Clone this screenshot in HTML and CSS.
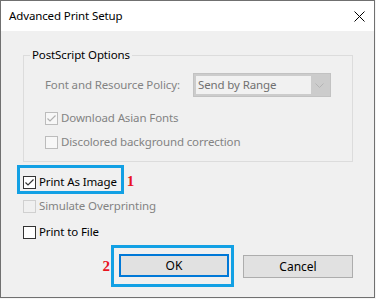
FILE: index.html
```html
<!DOCTYPE html>
<html lang="en">
<head>
    <meta charset="UTF-8">
    <title>Advanced Print Setup</title>
    <link rel="stylesheet" href="styles.css">
</head>
<body>

    <div class="window">
        <!-- Title Bar -->
        <div class="titlebar">
            <span class="title">Advanced Print Setup</span>
            <span class="close">
                <svg width="11" height="11" viewBox="0 0 11 11">
                    <path d="M0.5 0.5 L10.5 10.5 M10.5 0.5 L0.5 10.5" stroke="#000" stroke-width="1" fill="none"/>
                </svg>
            </span>
        </div>

        <div class="content">
            <!-- PostScript Options -->
            <fieldset class="group">
                <legend>PostScript Options</legend>
                <div class="group-body">
                    <div class="field-row">
                        <span class="field-label">Font and Resource Policy:</span>
                        <div class="combo">
                            <span class="combo-text">Send by Range</span>
                            <span class="combo-arrow">
                                <svg width="9" height="5" viewBox="0 0 9 5">
                                    <path d="M0.5 0.5 L4.5 4.5 L8.5 0.5" stroke="#b4b4b4" stroke-width="1" fill="none"/>
                                </svg>
                            </span>
                        </div>
                    </div>
                    <label class="check-row disabled">
                        <span class="box">
                            <svg width="11" height="11" viewBox="0 0 11 11">
                                <path d="M1.5 5.5 L4 8 L9.5 2.5" stroke="#b0b0b0" stroke-width="1.2" fill="none"/>
                            </svg>
                        </span>
                        Download Asian Fonts
                    </label>
                    <label class="check-row disabled">
                        <span class="box"></span>
                        Discolored background correction
                    </label>
                </div>
            </fieldset>

            <!-- Print As Image -->
            <div class="annotated">
                <label class="check-row highlight">
                    <span class="box">
                        <svg width="11" height="11" viewBox="0 0 11 11">
                            <path d="M1.5 5.5 L4 8 L9.5 2.5" stroke="#333" stroke-width="1.2" fill="none"/>
                        </svg>
                    </span>
                    Print As Image
                </label>
                <span class="marker">1</span>
            </div>

            <label class="check-row disabled faint">
                <span class="box"></span>
                Simulate Overprinting
            </label>

            <label class="check-row print-file">
                <span class="box"></span>
                Print to File
            </label>

            <!-- Buttons -->
            <div class="buttons">
                <span class="marker">2</span>
                <span class="btn-highlight">
                    <button class="btn btn-default">OK</button>
                </span>
                <button class="btn btn-cancel">Cancel</button>
            </div>
        </div>
    </div>

</body>
</html>
```

FILE: styles.css
```css
* {
    margin: 0;
    padding: 0;
    box-sizing: border-box;
}

body {
    font-family: 'Noto Sans', 'Open Sans', sans-serif;
    font-size: 11.5px;
    letter-spacing: -0.12px;
    line-height: 16px;
    background-color: #f5f5f5;
    color: #000;
}

/* Window frame */
.window {
    width: 375px;
    height: 298px;
    border: 1px solid #707070;
    background-color: #f0f0f0;
}

.titlebar {
    height: 30px;
    background-color: #fff;
    display: flex;
    align-items: center;
    justify-content: space-between;
    padding: 0 9px 0 8px;
}

.title {
    padding-bottom: 1px;
}

.close {
    display: flex;
}

.content {
    padding: 16px 21px 0 22px;
}

/* Group box */
.group {
    border: 1px solid #dcdcdc;
    padding: 0 21px 7px 6px;
    min-width: 0;
}

.group legend {
    padding: 0 2px;
    line-height: 16px;
}

.group-body {
    padding-left: 15px;
    padding-top: 10px;
}

.field-row {
    display: flex;
    align-items: center;
    height: 24px;
}

.field-label {
    width: 148px;
    color: #838383;
}

.combo {
    width: 138px;
    height: 24px;
    border: 1px solid #c2c2c2;
    background-color: #cccccc;
    padding: 2px;
    display: flex;
}

.combo-text {
    flex: 1;
    background-color: #f1f1f1;
    color: #707070;
    padding-left: 2px;
    line-height: 18px;
}

.combo-arrow {
    width: 17px;
    display: flex;
    align-items: center;
    justify-content: center;
}

/* Checkboxes */
.check-row {
    display: flex;
    align-items: center;
    height: 24px;
}

.group .check-row {
    margin-top: 9px;
}

.group .check-row + .check-row {
    margin-top: 0;
}

.box {
    width: 13px;
    height: 13px;
    border: 1px solid #333;
    background-color: #fff;
    margin-right: 3px;
    display: flex;
    align-items: center;
    justify-content: center;
    flex-shrink: 0;
}

.disabled {
    color: #838383;
}

.disabled .box {
    border-color: #bcbcbc;
    background-color: #f7f7f7;
}

.faint .box {
    border-color: #d0d0d0;
    background-color: #f0f0f0;
}

.print-file {
    margin-top: 2px;
}

/* Annotations */
.annotated {
    display: flex;
    align-items: center;
    margin-top: 3px;
    margin-left: -6px;
}

.highlight {
    display: inline-flex;
    height: 29px;
    border: 3px solid #12a0e4;
    padding: 5px 4px 0 3px;
    align-items: center;
}

.marker {
    font-family: 'Liberation Serif', serif;
    font-weight: 700;
    font-size: 15px;
    letter-spacing: 0;
    color: #e8141e;
    margin-left: 3px;
    padding-top: 3px;
}

.buttons {
    display: flex;
    justify-content: flex-end;
    align-items: center;
    margin-top: 1px;
}

.buttons .marker {
    margin-left: 0;
    margin-right: 1px;
    padding-top: 0;
}

.btn-highlight {
    display: inline-flex;
    border: 3px solid #12a0e4;
    padding: 6px 2px 7px 5px;
}

.btn {
    width: 110px;
    height: 23px;
    font-family: inherit;
    font-size: 12px;
    color: #000;
    background-color: #e1e1e1;
    border: 1px solid #adadad;
}

.btn-default {
    border: 2px solid #0078d7;
}

.btn-cancel {
    margin-left: 9px;
}
```
